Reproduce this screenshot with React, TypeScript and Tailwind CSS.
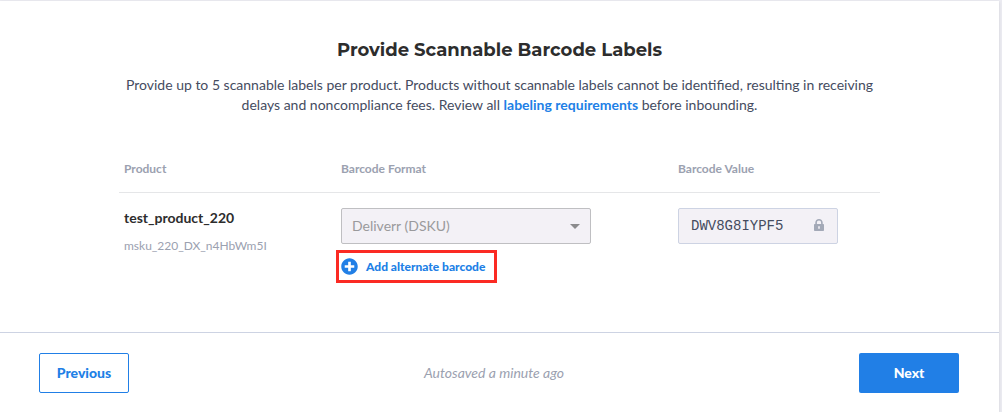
import React from "react";
import { FaPlusCircle } from "react-icons/fa";

const LockIcon = () => {
  return (
    <svg
      viewBox="0 0 10 12"
      aria-hidden="true"
      className="pointer-events-none absolute right-[14px] top-[11px] h-3 w-[10px] fill-[#a3a9b7]"
    >
      <path
        fillRule="evenodd"
        d="M1.300 5V3.600C1.300 1.500 2.900 0 5 0s3.700 1.500 3.700 3.600V5h.5c.5 0 .8.3.8.8v5.400c0 .5-.3.8-.8.8H.8c-.5 0-.8-.3-.8-.8V5.800c0-.5.3-.8.8-.8h.5zm1.600 0h4.200V3.700C7.100 2.400 6.200 1.500 5 1.500S2.900 2.400 2.900 3.700V5zM4.200 7.200v2.500h1.600V7.200H4.200z"
      />
    </svg>
  );
};

const Products = () => {
  return (
    <table className="mt-[42px] w-full table-fixed text-left">
      <thead className="border-b border-[#e5e6e8] text-xs text-[#9ba1b0]">
        <tr>
          <th className="w-[217px] px-[5px] pt-1 pb-[15px] font-bold">
            Product
          </th>
          <th className="w-[337px] px-[5px] pt-1 pb-[15px] font-bold">
            Barcode Format
          </th>
          <th className="px-[5px] pt-1 pb-[15px] font-bold">Barcode Value</th>
        </tr>
      </thead>
      <tbody>
        <tr className="align-top">
          <td className="px-[5px] pt-[15px]">
            <div className="text-sm font-bold text-[#2d2d2d]">
              test_product_220
            </div>
            <div className="mt-[10px] text-xs text-[#9ba1b0]">
              msku_220_DX_n4HbWm5I
            </div>
          </td>
          <td className="px-[5px] pt-[15px]">
            <div className="relative w-[250px]">
              <select
                aria-label="Barcode Format"
                disabled
                className="block h-9 w-full appearance-none rounded-xs border border-[#bfbfc2] bg-[#f3f1f6] px-[10px] text-sm text-[#9a9a9c] opacity-100"
              >
                <option>Deliverr (DSKU)</option>
              </select>
              <svg
                viewBox="0 0 10 5"
                aria-hidden="true"
                className="pointer-events-none absolute right-[11px] top-4 h-[5px] w-[10px] fill-[#8b8b8d]"
              >
                <path d="M0 0h10L5 5z" />
              </svg>
            </div>
            <button
              type="button"
              className="mt-[11px] flex h-[23px] w-[151px] items-center gap-2 text-xs font-black text-[#217fe6] outline-3 outline-offset-2 outline-[#fb2a23]"
            >
              <FaPlusCircle className="size-[17px] shrink-0" />
              <span className="whitespace-nowrap">Add alternate barcode</span>
            </button>
          </td>
          <td className="px-[5px] pt-[15px]">
            <div className="relative w-40">
              <input
                aria-label="Barcode Value"
                readOnly
                value="DWV8G8IYPF5"
                className="block h-9 w-full rounded-xs border border-[#cdd3e3] bg-[#f3f1f6] px-3 font-['Liberation_Mono',monospace] text-sm text-[#454c5f]"
              />
              <LockIcon />
            </div>
          </td>
        </tr>
      </tbody>
    </table>
  );
};

const App = () => {
  return (
    <div className="min-h-screen bg-[#ebebf1] pt-px pr-[3px] font-['Lato',sans-serif]">
      <div className="flex min-h-[calc(100vh-1px)] flex-col bg-white shadow-sm">
        <main className="mx-auto w-full max-w-[761px] grow pt-[37px]">
          <h1 className="text-center font-['Montserrat','Inter',sans-serif] text-lg leading-6 font-bold text-[#2d2d2d]">
            Provide Scannable Barcode Labels
          </h1>
          <p className="mt-[13px] text-center text-sm text-[#454c5f]">
            Provide up to 5 scannable labels per product. Products without
            scannable labels cannot be identified, resulting in receiving delays
            and noncompliance fees. Review all{" "}
            <a href="#labeling" className="font-bold text-[#217fe6]">
              labeling requirements
            </a>{" "}
            before inbounding.
          </p>
          <Products />
        </main>
        <footer className="flex items-center justify-between border-t border-[#cdd3e3] pt-5 pr-10 pb-[19px] pl-[39px]">
          <button
            type="button"
            className="h-10 w-[90px] rounded-xs border border-[#217fe6] text-sm font-black text-[#217fe6]"
          >
            Previous
          </button>
          <span className="text-sm text-[#9ba1b0] italic">
            Autosaved a minute ago
          </span>
          <button
            type="button"
            className="h-10 w-[100px] rounded-xs bg-[#217fe6] text-sm font-black text-white"
          >
            Next
          </button>
        </footer>
      </div>
    </div>
  );
};

export default App;
